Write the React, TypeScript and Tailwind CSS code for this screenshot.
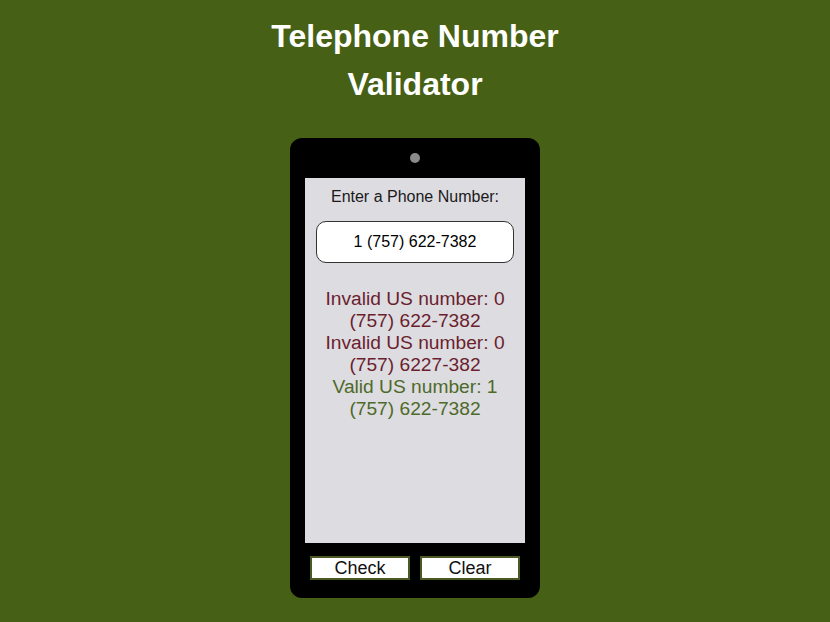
import React from "react";

export default function App() {
  return (
    <div
      className="w-[830px] h-[622px] bg-[#466015] overflow-hidden flex flex-col items-center"
      style={{ fontFamily: '"Liberation Sans", Arial, sans-serif' }}
    >
      <h1 className="mt-[12px] w-[320px] text-center text-white font-bold text-[32px] leading-[48px]">
        Telephone Number Validator
      </h1>
      <div className="mt-[30px] w-[250px] h-[460px] bg-black rounded-[12px] flex flex-col items-center">
        <div className="mt-[15px] w-[10px] h-[10px] rounded-full bg-[#8a8a8a]" />
        <div className="mt-[15px] w-[220px] h-[365px] bg-[#dddce1] flex flex-col items-center">
          <label className="mt-[9px] text-[16px] leading-[20px] text-[#1a1a1a]">
            Enter a Phone Number:
          </label>
          <div className="mt-[14px] w-[198px] h-[42px] bg-white border border-[#333] rounded-[10px] flex items-center justify-center text-[16px] text-black">
            1 (757) 622-7382
          </div>
          <div className="mt-[25px] w-full text-center text-[19.2px] leading-[22px]">
            <p className="text-[#6b1f2e]">Invalid US number: 0<br />(757) 622-7382</p>
            <p className="text-[#6b1f2e]">Invalid US number: 0<br />(757) 6227-382</p>
            <p className="text-[#4d6a2a]">Valid US number: 1<br />(757) 622-7382</p>
          </div>
        </div>
        <div className="mt-[13px] flex gap-[10px]">
          <button className="w-[100px] h-[24px] bg-white border-2 border-[#4a5a22] text-[18px] leading-[20px] text-[#111]">
            Check
          </button>
          <button className="w-[100px] h-[24px] bg-white border-2 border-[#4a5a22] text-[18px] leading-[20px] text-[#111]">
            Clear
          </button>
        </div>
      </div>
    </div>
  );
}
